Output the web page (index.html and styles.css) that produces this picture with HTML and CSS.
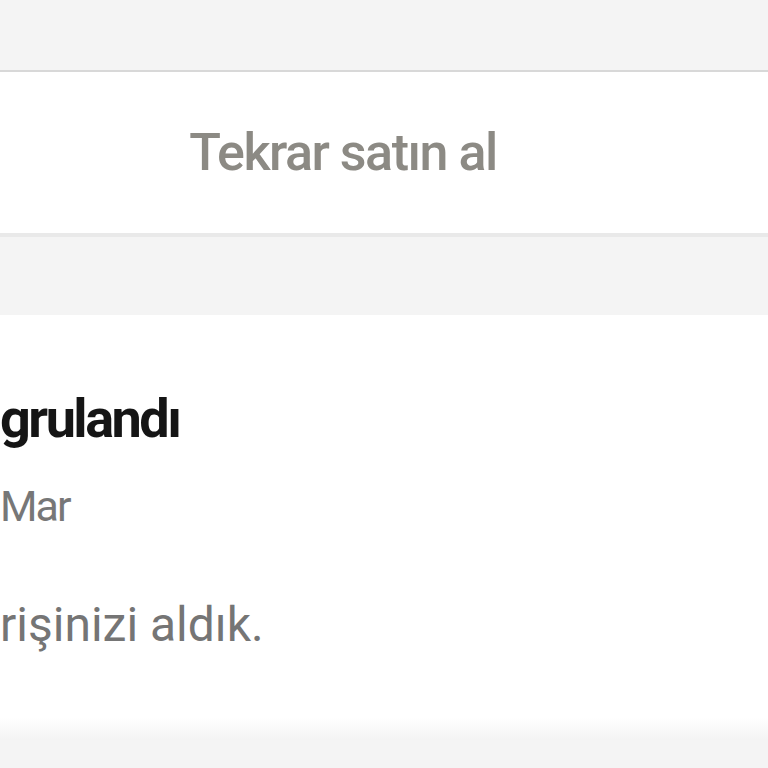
FILE: index.html
```html
<!DOCTYPE html>
<html lang="tr">
<head>
    <meta charset="UTF-8">
    <meta name="viewport" content="width=device-width, initial-scale=1.0">
    <title>Sipariş</title>
    <link rel="stylesheet" href="styles.css">
</head>
<body>
    <div id="page">
        <div class="band-top"></div>
        <div class="action-row">
            <button class="rebuy">Tekrar satın al</button>
        </div>
        <div class="band-gap"></div>
        <div class="status-card">
            <div class="status-body">
                <div class="status-title">grulandı</div>
                <div class="status-date">Mar</div>
                <div class="status-text">rişinizi aldık.</div>
            </div>
        </div>
    </div>
</body>
</html>
```

FILE: styles.css
```css
body {
    margin: 0;
    font-family: Roboto, "Liberation Sans", Arial, sans-serif;
    background-color: #f4f4f4;
    overflow: hidden;
}
#page {
    width: 768px;
    height: 768px;
    display: flex;
    flex-direction: column;
}
.band-top {
    height: 70px;
}
.action-row {
    height: 161px;
    background-color: #fff;
    border-top: 2px solid #d8d8d8;
    border-bottom: 4px solid #e9e9e9;
    display: flex;
    align-items: center;
    justify-content: center;
}
.rebuy {
    border: none;
    background: none;
    padding: 0;
    margin-left: -82px;
    font-family: Roboto, "Liberation Sans", Arial, sans-serif;
    font-size: 52px;
    font-weight: 500;
    letter-spacing: -1.5px;
    color: #8c8a84;
    cursor: pointer;
}
.band-gap {
    height: 78px;
}
.status-card {
    height: 425px;
    background: linear-gradient(#fff calc(100% - 22px), #f4f4f4);
    overflow: hidden;
}
.status-body {
    padding-top: 72px;
    white-space: nowrap;
}
.status-title {
    font-size: 54px;
    line-height: 64px;
    font-weight: 700;
    letter-spacing: -2.5px;
    color: #151515;
}
.status-date {
    margin-top: 27px;
    font-size: 43px;
    line-height: 56px;
    letter-spacing: -2px;
    color: #777;
}
.status-text {
    margin-top: 63px;
    font-size: 48px;
    line-height: 56px;
    color: #757575;
}
```
